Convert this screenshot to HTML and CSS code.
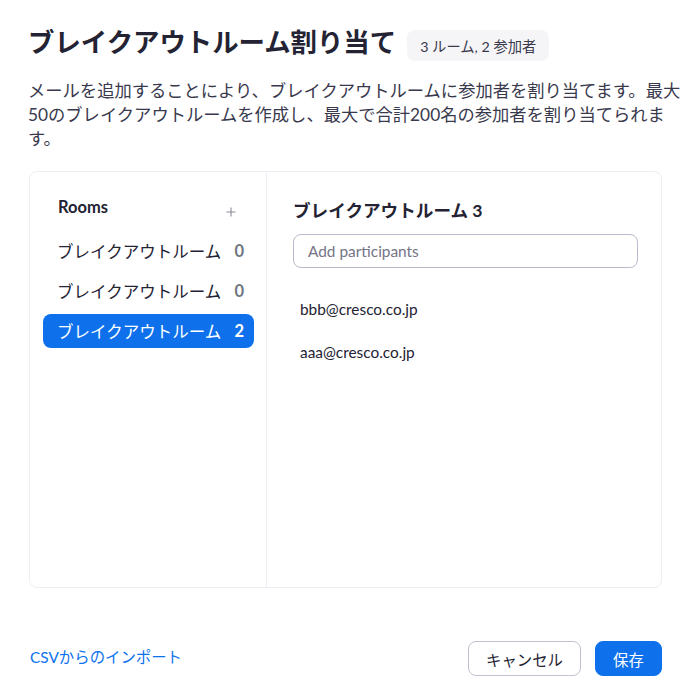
FILE: index.html
```html
<!DOCTYPE html>
<html lang="ja">
<head>
<meta charset="utf-8">
<title>ブレイクアウトルーム割り当て</title>
<link rel="stylesheet" href="styles.css">
</head>
<body>
<div class="dialog">
  <div class="header">
    <h1 class="title">ブレイクアウトルーム割り当て</h1>
    <span class="badge">3 ルーム, 2 参加者</span>
  </div>
  <p class="desc">メールを追加することにより、ブレイクアウトルームに参加者を割り当てます。最大<br>50のブレイクアウトルームを作成し、最大で合計200名の参加者を割り当てられま<br>す。</p>
  <div class="panel">
    <div class="sidebar">
      <div class="rooms-head">
        <span class="rooms-title">Rooms</span>
        <svg class="plus" width="10" height="10" viewBox="0 0 10 10"><path d="M5 0.5V9.5M0.5 5H9.5" stroke="#8b8b9b" stroke-width="1.1" fill="none"/></svg>
      </div>
      <div class="room"><span>ブレイクアウトルーム</span><span class="count">0</span></div>
      <div class="room"><span>ブレイクアウトルーム</span><span class="count">0</span></div>
      <div class="room selected"><span>ブレイクアウトルーム</span><span class="count">2</span></div>
    </div>
    <div class="detail">
      <h2 class="detail-title">ブレイクアウトルーム 3</h2>
      <input class="add-input" type="text" placeholder="Add participants">
      <ul class="emails">
        <li>bbb@cresco.co.jp</li>
        <li>aaa@cresco.co.jp</li>
      </ul>
    </div>
  </div>
  <div class="footer">
    <a class="import" href="#">CSVからのインポート</a>
    <div class="actions">
      <button class="btn cancel">キャンセル</button>
      <button class="btn save">保存</button>
    </div>
  </div>
</div>
</body>
</html>
```
FILE: styles.css
```css
* { box-sizing: border-box; }
html, body { margin: 0; padding: 0; background: #fff; }
body {
  font-family: Lato, "Noto Sans CJK JP", sans-serif;
  color: #232333;
}
.dialog {
  width: 698px;
  padding: 25px 36px 0 28px;
}
.header {
  display: flex;
  align-items: flex-start;
  gap: 11px;
}
.title {
  margin: 0;
  font-size: 26.4px;
  line-height: 34px;
  font-weight: 700;
  color: #232333;
  white-space: nowrap;
}
.badge {
  margin-top: 5px;
  height: 31px;
  padding: 0 13px;
  display: flex;
  align-items: center;
  background: #f5f5f7;
  border-radius: 8px;
  font-size: 14.3px;
  color: #39394d;
  white-space: nowrap;
}
.desc {
  margin: 18px -20px 0 0;
  font-size: 17.3px;
  line-height: 24px;
  color: #39394d;
  white-space: nowrap;
}
.panel {
  margin: 20px 0 0 1px;
  height: 417px;
  border: 1px solid #ededf4;
  border-radius: 8px;
  display: flex;
}
.sidebar {
  width: 237px;
  flex: none;
  border-right: 1px solid #ededf4;
  padding: 23px 12px 0 13px;
}
.rooms-head {
  display: flex;
  justify-content: space-between;
  align-items: flex-start;
  padding: 0 18px 0 15px;
  height: 24px;
  margin-bottom: 15px;
}
.rooms-title {
  font-size: 16.5px;
  line-height: 24px;
  font-weight: 700;
  color: #232333;
}
.plus { margin-top: 12px; }
.room {
  height: 34px;
  margin-bottom: 6px;
  padding: 0 10px 0 14px;
  display: flex;
  justify-content: space-between;
  align-items: center;
  font-size: 16.5px;
  color: #232333;
  border-radius: 8px;
}
.room .count {
  font-weight: 700;
  color: #6e7680;
}
.room.selected {
  background: #0e71eb;
  color: #fff;
}
.room.selected .count { color: #fff; }
.detail {
  flex: 1;
  padding: 27px 23px 0 26px;
}
.detail-title {
  margin: 0;
  font-size: 17.6px;
  line-height: 24px;
  font-weight: 700;
  color: #232333;
}
.add-input {
  display: block;
  margin-top: 11px;
  width: 100%;
  height: 34px;
  border: 1px solid #babacc;
  border-radius: 8px;
  padding: 0 14px;
  font-family: Lato, "Noto Sans CJK JP", sans-serif;
  font-size: 15.4px;
  color: #232333;
  background: #fff;
  outline: none;
}
.add-input::placeholder { color: #747487; }
.emails {
  list-style: none;
  margin: 19px 0 0;
  padding: 0 0 0 7px;
}
.emails li {
  height: 43px;
  display: flex;
  align-items: center;
  font-size: 15.4px;
  color: #232333;
}
.footer {
  margin-top: 53px;
  display: flex;
  justify-content: space-between;
  align-items: center;
  padding-left: 2px;
}
.import {
  font-size: 15.4px;
  color: #0e72ed;
  text-decoration: none;
  margin-bottom: 5px;
}
.actions {
  display: flex;
  gap: 14px;
}
.btn {
  height: 35px;
  border-radius: 8px;
  font-family: Lato, "Noto Sans CJK JP", sans-serif;
  font-size: 15.4px;
  cursor: pointer;
}
.cancel {
  width: 113px;
  background: #fff;
  border: 1px solid #c1c1d1;
  color: #232333;
}
.save {
  width: 67px;
  background: #0e71eb;
  border: 1px solid #0e71eb;
  color: #fff;
}
```
